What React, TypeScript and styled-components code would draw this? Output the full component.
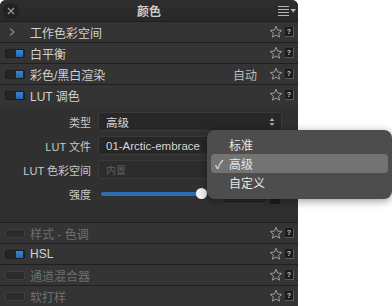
import React from 'react';
import styled, { createGlobalStyle } from 'styled-components';

const GlobalStyle = createGlobalStyle`
  html, body {
    margin: 0;
    padding: 0;
    background: #ffffff;
  }
  body {
    font-family: "Liberation Sans", "Noto Sans CJK SC", sans-serif;
  }
`;

const Page = styled.div`
  position: relative;
  width: 392px;
  height: 306px;
  overflow: hidden;
`;

const Panel = styled.div`
  width: 298px;
  height: 306px;
  background: #2f2f2f;
  border-radius: 6px 6px 0 0;
  overflow: hidden;
  display: flex;
  flex-direction: column;
`;

const TitleBar = styled.div`
  height: 21px;
  flex: none;
  display: grid;
  grid-template-columns: 24px 1fr 24px;
  align-items: center;
  background: linear-gradient(#2e2e2e, #282828);
`;

const CloseButton = styled.div`
  width: 16px;
  height: 16px;
  margin-left: 3px;
  border-radius: 50%;
  background: #222;
  display: flex;
  align-items: center;
  justify-content: center;
`;

const Title = styled.div`
  text-align: center;
  color: #cfcfcf;
  font-size: 12px;
  font-weight: bold;
`;

const MenuButton = styled.div`
  display: flex;
  justify-content: flex-end;
  padding-right: 1px;
`;

const Row = styled.div<{ $dim?: boolean }>`
  height: 20px;
  flex: none;
  border-top: 1px solid #1f1f1f;
  background: #343434;
  display: flex;
  align-items: center;
  color: ${(p) => (p.$dim ? '#6f6f6f' : '#d2d2d2')};
  font-size: 12px;
`;

const Lead = styled.div`
  width: 30px;
  flex: none;
  display: flex;
  align-items: center;
  padding-left: 5px;
  box-sizing: border-box;
`;

const Toggle = styled.div<{ $on?: boolean }>`
  width: 20px;
  height: 9px;
  box-sizing: border-box;
  border-radius: 2px;
  background: ${(p) => (p.$on ? '#262626' : '#2b2b2b')};
  border: 1px solid ${(p) => (p.$on ? '#1d1d1d' : '#3e3e3e')};
  display: flex;
  justify-content: flex-end;
  align-items: center;
  padding-right: 1px;
`;

const ToggleDot = styled.div`
  width: 7px;
  height: 7px;
  background: linear-gradient(#3a86d6, #2466b0);
`;

const Label = styled.div`
  flex: 1;
  white-space: nowrap;
`;

const Extra = styled.div`
  color: #bdbdbd;
  font-size: 12px;
  margin-right: 12px;
`;

const Tools = styled.div`
  display: flex;
  align-items: center;
  gap: 2px;
  padding-right: 4px;
`;

const HelpBox = styled.div`
  width: 9px;
  height: 10px;
  box-sizing: border-box;
  background: #1c1c1c;
  border-right: 1px solid #5a5a5a;
  border-bottom: 1px solid #5a5a5a;
  color: #c9c9c9;
  font-size: 7px;
  font-weight: bold;
  line-height: 9px;
  text-align: center;
`;

const FormBody = styled.div`
  flex: none;
  height: 110px;
  padding-top: 7px;
  box-sizing: content-box;
  background: #303030;
  display: grid;
  grid-template-columns: 91px 1fr;
  grid-auto-rows: 19px;
  row-gap: 5px;
  column-gap: 7px;
  padding-right: 16px;
  align-items: center;
`;

const FieldLabel = styled.div`
  text-align: right;
  color: #cacaca;
  font-size: 11px;
  white-space: nowrap;
`;

const Select = styled.div<{ $disabled?: boolean }>`
  height: 19px;
  box-sizing: border-box;
  border-radius: 3px;
  background: ${(p) => (p.$disabled ? '#2c2c2c' : '#272727')};
  border: 1px solid #3a3a3a;
  display: flex;
  align-items: center;
  justify-content: space-between;
  padding: 0 6px 0 7px;
  color: ${(p) => (p.$disabled ? '#5f5f5f' : '#d6d6d6')};
  font-size: ${(p) => (p.$disabled ? '10px' : '11.5px')};
`;

const SliderRow = styled.div`
  display: flex;
  align-items: center;
  height: 19px;
`;

const Track = styled.div`
  position: relative;
  width: 100px;
  margin-left: 3px;
  height: 4px;
  border-radius: 2px;
  background: #2f6db3;
`;

const Thumb = styled.div`
  position: absolute;
  right: -6px;
  top: -4px;
  width: 11px;
  height: 11px;
  border-radius: 50%;
  background: #f2f2f2;
`;

const NumberBox = styled.div`
  width: 45px;
  height: 18px;
  margin-left: 21px;
  margin-top: 3px;
  box-sizing: border-box;
  border: 1px solid #3b3b3b;
  border-radius: 2px;
  background: #2a2a2a;
`;

const Spin = styled.div`
  width: 10px;
  height: 14px;
  margin-left: 3px;
  margin-top: 7px;
  background: #1e1e1e;
`;

const Popup = styled.div`
  position: absolute;
  left: 207px;
  top: 130px;
  width: 185px;
  height: 69px;
  box-sizing: border-box;
  padding: 5px 4px;
  border-radius: 8px;
  background: #4d4d4d;
  box-shadow: 0 2px 8px rgba(0, 0, 0, 0.4);
  display: flex;
  flex-direction: column;
`;

const MenuItem = styled.div<{ $active?: boolean }>`
  height: 19px;
  border-radius: 4px;
  display: flex;
  align-items: center;
  background: ${(p) => (p.$active ? '#737373' : 'transparent')};
  color: #e6e6e6;
  font-size: 12px;
`;

const Check = styled.span`
  width: 18px;
  padding-left: 4px;
  box-sizing: border-box;
  font-size: 12px;
`;

const Star = () => (
  <svg width="14" height="14" viewBox="0 0 14 14">
    <path
      d="M7 1.2 L8.6 5.1 L12.8 5.4 L9.6 8.1 L10.6 12.2 L7 10 L3.4 12.2 L4.4 8.1 L1.2 5.4 L5.4 5.1 Z"
      fill="none"
      stroke="#9a9a9a"
      strokeWidth="1"
      strokeLinejoin="round"
    />
  </svg>
);

const RowTools = () => (
  <Tools>
    <Star />
    <HelpBox>?</HelpBox>
  </Tools>
);

type RowData = { label: string; toggle: 'on' | 'off' | 'chevron'; dim?: boolean; extra?: string };

const topRows: RowData[] = [
  { label: '工作色彩空间', toggle: 'chevron' },
  { label: '白平衡', toggle: 'on' },
  { label: '彩色/黑白渲染', toggle: 'on', extra: '自动' },
  { label: 'LUT 调色', toggle: 'on' },
];

const bottomRows: RowData[] = [
  { label: '样式 - 色调', toggle: 'off', dim: true },
  { label: 'HSL', toggle: 'on' },
  { label: '通道混合器', toggle: 'off', dim: true },
  { label: '软打样', toggle: 'off', dim: true },
];

function ToolRow({ label, toggle, dim, extra }: RowData) {
  return (
    <Row $dim={dim}>
      <Lead>
        {toggle === 'chevron' ? (
          <svg width="10" height="10" viewBox="0 0 10 10" style={{ marginLeft: 2 }}>
            <path d="M3 1.5 L7 5 L3 8.5" fill="none" stroke="#8a8a8a" strokeWidth="1.2" />
          </svg>
        ) : (
          <Toggle $on={toggle === 'on'}>{toggle === 'on' && <ToggleDot />}</Toggle>
        )}
      </Lead>
      <Label>{label}</Label>
      {extra && <Extra>{extra}</Extra>}
      <RowTools />
    </Row>
  );
}

export default function App() {
  return (
    <Page>
      <GlobalStyle />
      <Panel>
        <TitleBar>
          <CloseButton>
            <svg width="8" height="8" viewBox="0 0 8 8">
              <path d="M1 1 L7 7 M7 1 L1 7" stroke="#9a9a9a" strokeWidth="1.2" />
            </svg>
          </CloseButton>
          <Title>颜色</Title>
          <MenuButton>
            <svg width="20" height="12" viewBox="0 0 20 12">
              <path d="M1 1.5 H12 M1 4.5 H12 M1 7.5 H12 M1 10.5 H12" stroke="#b5b5b5" strokeWidth="1.2" />
              <path d="M13.5 4 L19 4 L16.25 7.5 Z" fill="#b5b5b5" />
            </svg>
          </MenuButton>
        </TitleBar>
        {topRows.map((r) => (
          <ToolRow key={r.label} {...r} />
        ))}
        <FormBody>
          <FieldLabel>类型</FieldLabel>
          <Select>
            <span>高级</span>
            <svg width="6" height="10" viewBox="0 0 6 10">
              <path d="M0.5 4 L3 1 L5.5 4 Z M0.5 6 L3 9 L5.5 6 Z" fill="#a8a8a8" />
            </svg>
          </Select>
          <FieldLabel>LUT 文件</FieldLabel>
          <Select>
            <span>01-Arctic-embrace</span>
          </Select>
          <FieldLabel>LUT 色彩空间</FieldLabel>
          <Select $disabled>
            <span>内置</span>
          </Select>
          <FieldLabel>强度</FieldLabel>
          <SliderRow>
            <Track>
              <Thumb />
            </Track>
            <NumberBox />
            <Spin />
          </SliderRow>
        </FormBody>
        {bottomRows.map((r) => (
          <ToolRow key={r.label} {...r} />
        ))}
      </Panel>
      <Popup>
        <MenuItem>
          <Check />
          标准
        </MenuItem>
        <MenuItem $active>
          <Check>✓</Check>
          高级
        </MenuItem>
        <MenuItem>
          <Check />
          自定义
        </MenuItem>
      </Popup>
    </Page>
  );
}
